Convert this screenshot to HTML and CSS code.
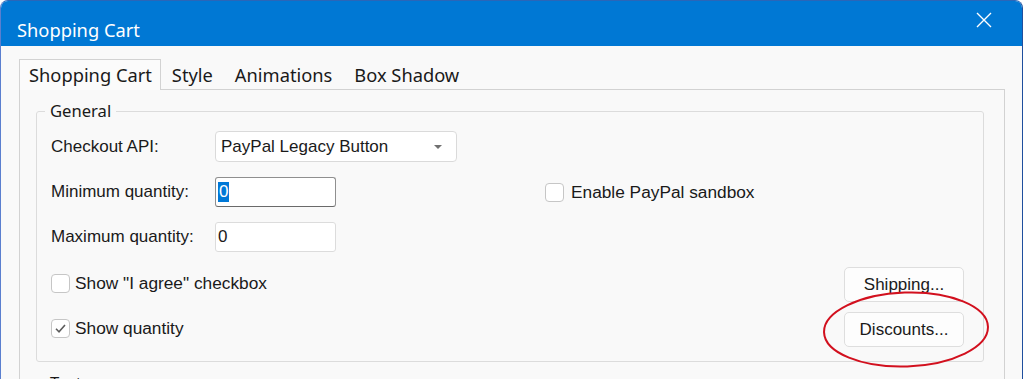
FILE: index.html
```html
<!DOCTYPE html>
<html>
<head>
<meta charset="utf-8">
<link rel="stylesheet" href="styles.css">
</head>
<body>
<div class="window">
  <div class="titlebar">
    <span class="title">Shopping Cart</span>
    <span class="close">
      <svg width="16" height="16" viewBox="0 0 16 16"><path d="M1 1 L15 15 M15 1 L1 15" stroke="#fff" stroke-width="1.4" fill="none"/></svg>
    </span>
  </div>
  <div class="content">
    <div class="tabs">
      <div class="tab active">Shopping Cart</div>
      <div class="tab">Style</div>
      <div class="tab">Animations</div>
      <div class="tab">Box Shadow</div>
    </div>
    <div class="panel">
      <div class="group">
        <span class="legend">General</span>
        <div class="grid">
          <span class="lbl">Checkout API:</span>
          <div class="select">PayPal Legacy Button<span class="arrow"></span></div>
          <span></span>
          <span class="lbl">Minimum quantity:</span>
          <div class="input focused"><span class="sel">0</span></div>
          <span class="check"><span class="box"></span>Enable PayPal sandbox</span>
          <span class="lbl">Maximum quantity:</span>
          <div class="input">0</div>
          <span></span>
        </div>
        <div class="row first">
          <span class="check top"><span class="box"></span>Show "I agree" checkbox</span>
          <div class="btn">Shipping...</div>
        </div>
        <div class="row">
          <span class="check top"><span class="box checked"><svg width="13" height="13" viewBox="0 0 13 13"><path d="M2 6.8 L5 9.8 L11 3" stroke="#5c5c5c" stroke-width="1.6" fill="none"/></svg></span>Show quantity</span>
          <div class="btn">Discounts...</div>
        </div>
      </div>
      <div class="group second">
        <span class="legend">Texts</span>
      </div>
    </div>
  </div>
  <svg class="ring" width="170" height="80" viewBox="0 0 170 80"><ellipse cx="84" cy="38.5" rx="82" ry="37" fill="none" stroke="#d2101e" stroke-width="2" transform="rotate(-2 84 38.5)"/></svg>
</div>
</body>
</html>
```

FILE: styles.css
```css
* { box-sizing: border-box; }
html, body { margin: 0; padding: 0; background: #ffffff; }
body { height: 379px; overflow: hidden; }

.window {
  position: relative;
  width: 1023px;
  height: 420px;
  background: #f9f9f9;
  border-left: 1px solid #5a7fcf;
  border-right: 1px solid #1f4f9e;
  border-top: 1px solid #2a66b8;
  border-radius: 8px 8px 0 0;
  overflow: hidden;
}

.titlebar {
  height: 45px;
  background: #0078d4;
  display: flex;
  align-items: center;
  justify-content: space-between;
  padding: 12px 30px 0 16px;
}
.title {
  font-family: "Noto Sans", sans-serif;
  font-size: 18.3px;
  color: #ffffff;
}
.close { display: flex; margin-top: -19px; }

.content {
  padding: 13px 17px 0 18px;
}

.tabs {
  display: flex;
  height: 30px;
  position: relative;
  z-index: 1;
}
.tab {
  font-family: "Noto Sans", sans-serif;
  font-size: 18.3px;
  color: #1a1a1a;
  padding: 0 10px;
  line-height: 29px;
  border: 1px solid transparent;
  border-bottom: none;
}
.tab.active {
  border-color: #d2d2d2;
  background: #fbfbfb;
  height: 31px;
  padding: 0 8px 0 9px;
}

.panel {
  border: 1px solid #d2d2d2;
  border-bottom: none;
  background: #f9f9f9;
  height: 320px;
  padding: 21px 20px 0 16px;
}

.group {
  position: relative;
  border: 1px solid #dcdcdc;
  border-radius: 3px;
  padding: 19px 19px 14px 14px;
}
.legend {
  position: absolute;
  top: -13px;
  left: 8px;
  padding: 0 5px;
  background: #f9f9f9;
  font-family: "Noto Sans", sans-serif;
  font-size: 16.6px;
  color: #1a1a1a;
  line-height: 24px;
}
.group.second {
  margin-top: 21px;
  height: 40px;
  border-bottom: none;
}

.grid {
  display: grid;
  grid-template-columns: 164px 330px 1fr;
  grid-template-rows: 31px 30px 30px;
  row-gap: 15px;
  align-items: center;
  font-family: "Liberation Sans", Arial, sans-serif;
  font-size: 17px;
  color: #1a1a1a;
}
.lbl { line-height: 20px; }

.select {
  position: relative;
  width: 242px;
  height: 31px;
  background: #ffffff;
  border: 1px solid #dadada;
  border-radius: 4px;
  padding-left: 5px;
  line-height: 29px;
}
.arrow {
  position: absolute;
  right: 14px;
  top: 13px;
  width: 0;
  height: 0;
  border-left: 4px solid transparent;
  border-right: 4px solid transparent;
  border-top: 4px solid #707070;
}

.input {
  width: 121px;
  height: 30px;
  background: #ffffff;
  border: 1px solid #dcdcdc;
  border-radius: 3px;
  padding: 3px 0 0 2px;
  line-height: 21px;
}
.input.focused {
  border-color: #8f8f8f;
  border-bottom-color: #6a6a6a;
}
.sel {
  display: inline-block;
  background: #0078d7;
  color: #ffffff;
  padding: 0 1px;
  line-height: 20px;
}

.check {
  display: flex;
  align-items: center;
  gap: 7px;
  font-family: "Liberation Sans", Arial, sans-serif;
  font-size: 17.3px;
  color: #1a1a1a;
  line-height: 20px;
}
.check.top { margin-top: 6px; gap: 5px; }
.box {
  width: 19px;
  height: 19px;
  flex: none;
  background: #ffffff;
  border: 1px solid #c6c6c6;
  border-radius: 4px;
  display: flex;
  align-items: center;
  justify-content: center;
}

.row {
  display: flex;
  justify-content: space-between;
  align-items: flex-start;
  height: 35px;
  margin-top: 10px;
}
.row.first { margin-top: 15px; }

.btn {
  width: 120px;
  height: 35px;
  background: #fdfdfd;
  border: 1px solid #dedede;
  border-radius: 5px;
  display: flex;
  align-items: center;
  justify-content: center;
  font-family: "Liberation Sans", Arial, sans-serif;
  font-size: 17px;
  color: #1a1a1a;
}

.ring {
  position: absolute;
  left: 821px;
  top: 290px;
}
```
